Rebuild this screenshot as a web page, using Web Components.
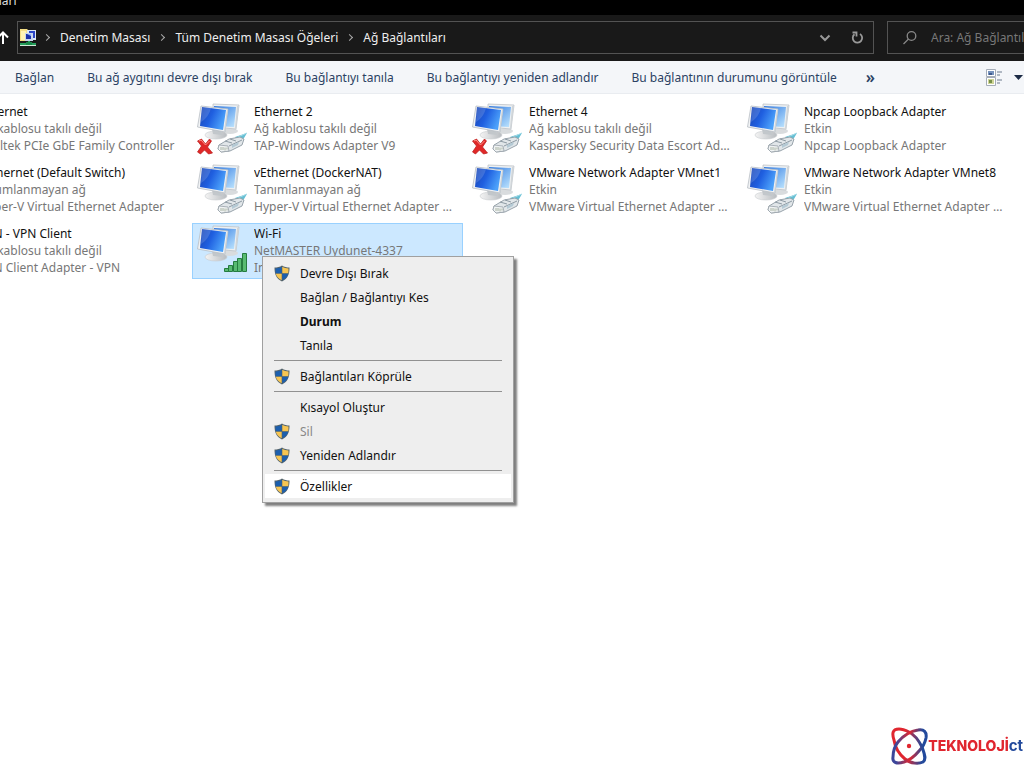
<!DOCTYPE html>
<html lang="tr">
<head>
<meta charset="utf-8">
<meta name="viewport" content="width=device-width, initial-scale=1">
<title>Ağ Bağlantıları</title>
<style>
  body {
    margin: 0;
    min-height: 100vh;
    overflow: hidden;
    background: #fff;
    color: #111;
    font: 12px/17px "Noto Sans", "Open Sans", sans-serif;
  }
</style>
</head>
<body>

<explorer-window>
  <title-bar slot="title">Ağ Bağlantıları</title-bar>

  <address-bar slot="address" placeholder="Ara: Ağ Bağlantıları">
    <a href="#panel">Denetim Masası</a>
    <a href="#tum">Tüm Denetim Masası Öğeleri</a>
    <a href="#ag">Ağ Bağlantıları</a>
  </address-bar>

  <command-bar slot="commands">
    <button>Bağlan</button>
    <button>Bu ağ aygıtını devre dışı bırak</button>
    <button>Bu bağlantıyı tanıla</button>
    <button>Bu bağlantıyı yeniden adlandır</button>
    <button>Bu bağlantının durumunu görüntüle</button>
    <button class="more" aria-label="Diğer komutlar">»</button>
  </command-bar>

  <adapter-tile name="Ethernet" state="Ağ kablosu takılı değil" device="Realtek PCIe GbE Family Controller" kind="off"></adapter-tile>
  <adapter-tile name="Ethernet 2" state="Ağ kablosu takılı değil" device="TAP-Windows Adapter V9" kind="off"></adapter-tile>
  <adapter-tile name="Ethernet 4" state="Ağ kablosu takılı değil" device="Kaspersky Security Data Escort Adapter" kind="off"></adapter-tile>
  <adapter-tile name="Npcap Loopback Adapter" state="Etkin" device="Npcap Loopback Adapter"></adapter-tile>
  <adapter-tile name="vEthernet (Default Switch)" state="Tanımlanmayan ağ" device="Hyper-V Virtual Ethernet Adapter"></adapter-tile>
  <adapter-tile name="vEthernet (DockerNAT)" state="Tanımlanmayan ağ" device="Hyper-V Virtual Ethernet Adapter #2"></adapter-tile>
  <adapter-tile name="VMware Network Adapter VMnet1" state="Etkin" device="VMware Virtual Ethernet Adapter VMnet1"></adapter-tile>
  <adapter-tile name="VMware Network Adapter VMnet8" state="Etkin" device="VMware Virtual Ethernet Adapter VMnet8"></adapter-tile>
  <adapter-tile name="VPN - VPN Client" state="Ağ kablosu takılı değil" device="VPN Client Adapter - VPN" kind="off"></adapter-tile>
  <adapter-tile name="Wi-Fi" state="NetMASTER Uydunet-4337" device="Intel(R)" kind="wifi" selected>
    <context-menu>
      <menu-item shield>Devre Dışı Bırak</menu-item>
      <menu-item>Bağlan / Bağlantıyı Kes</menu-item>
      <menu-item default>Durum</menu-item>
      <menu-item>Tanıla</menu-item>
      <hr>
      <menu-item shield>Bağlantıları Köprüle</menu-item>
      <hr>
      <menu-item>Kısayol Oluştur</menu-item>
      <menu-item shield disabled>Sil</menu-item>
      <menu-item shield>Yeniden Adlandır</menu-item>
      <hr>
      <menu-item shield active>Özellikler</menu-item>
    </context-menu>
  </adapter-tile>

  <site-logo slot="logo"></site-logo>
</explorer-window>

<script>
class ExplorerWindow extends HTMLElement {
  constructor() {
    super();
    this.attachShadow({ mode: "open" }).innerHTML = `
      <style>
        :host {
          display: flex;
          flex-direction: column;
          min-height: 100vh;
        }

        /* the folder view is scrolled a little to the right */
        main {
          display: grid;
          grid-template-columns: repeat(auto-fill, 271px);
          gap: 5px 4px;
          margin-left: -83px;
          padding-top: 7px;
        }
      </style>
      <slot name="title"></slot>
      <slot name="address"></slot>
      <slot name="commands"></slot>
      <main><slot></slot></main>
      <slot name="logo"></slot>
    `;
  }
}

class TitleBar extends HTMLElement {
  constructor() {
    super();
    this.attachShadow({ mode: "open" }).innerHTML = `
      <style>
        :host {
          display: flex;
          align-items: flex-end;
          height: 15px;
          background: #000;
          color: #ddd;
          overflow: hidden;
        }

        span {
          margin: 0 0 6px -66px;
          white-space: nowrap;
        }
      </style>
      <span><slot></slot></span>
    `;
  }
}

class AddressBar extends HTMLElement {
  constructor() {
    super();
    this.attachShadow({ mode: "open" }).innerHTML = `
      <style>
        :host {
          display: flex;
          height: 46px;
          box-sizing: border-box;
          padding: 6px 0 7px;
          background: #191919;
          color: #eee;
        }

        button {
          display: flex;
          align-items: center;
          justify-content: center;
          padding: 0;
          border: 0;
          background: none;
          color: #999;
        }

        .up {
          width: 17px;
          justify-content: flex-start;
          color: #fff;
        }

        .path {
          flex: 1;
          display: flex;
          align-items: center;
          box-sizing: border-box;
          border: 1px solid #535353;
          padding-left: 2px;
        }

        nav {
          flex: 1;
          display: flex;
          gap: 2px;
        }

        .path button {
          width: 32px;
          height: 100%;
        }

        ::slotted(a) {
          display: flex;
          align-items: center;
          color: inherit;
          text-decoration: none;
          white-space: nowrap;
        }

        ::slotted(a)::before {
          content: "";
          width: 4px;
          height: 4px;
          margin: 0 11px 0 7px;
          border: solid #aaa;
          border-width: 1px 1px 0 0;
          transform: rotate(45deg);
        }

        label {
          display: flex;
          align-items: center;
          box-sizing: border-box;
          width: 137px;
          margin-left: 13px;
          padding-left: 14px;
          border: 1px solid #535353;
          border-right: 0;
          color: #888;
        }

        input {
          flex: 1;
          min-width: 0;
          margin-left: 13px;
          padding: 0;
          border: 0;
          background: none;
          font: inherit;
          color: inherit;
        }

        input::placeholder {
          color: #777;
        }
      </style>
      <button class="up" aria-label="Yukarı">
        <svg width="9" height="14" viewBox="0 0 9 14" fill="none" stroke="currentColor" stroke-width="2"><path d="M3 13V2M-2 6.5 3 1.5l5 5"/></svg>
      </button>
      <div class="path">
        <svg width="17" height="18" viewBox="0 0 17 18">
          <path d="M0 0h7l2 2v10H0z" fill="#f5df86"/>
          <path d="M1 2h5v9H1z" fill="#fff3b4"/>
          <path d="M7 1h9v10H7z" fill="#dce7f5"/>
          <path d="M9 2h6v7H9z" fill="#2a45c8"/>
          <path d="M5 4h8v8H5z" fill="#c8d6ee"/>
          <path d="M6 5h5v5H6z" fill="#1b2fa8"/>
          <path d="M7 5h4v2z" fill="#8fb4ff"/>
          <path d="M8 12h2v2h6v2H0v-2h8z" fill="#26a05c"/>
          <path d="M6 13h6v3H6z" fill="#188a49"/>
          <path d="M0 16h16v1H0z" fill="#cfe9d8"/>
        </svg>
        <nav aria-label="Konum"><slot></slot></nav>
        <button aria-label="Önceki konumlar">
          <svg width="12" height="8" viewBox="0 0 12 8" fill="none" stroke="currentColor" stroke-width="2"><path d="m1.500 1.500 4.500 4.500 4.500-4.500"/></svg>
        </button>
        <button aria-label="Yenile">
          <svg width="13" height="13" viewBox="0 0 13 13" fill="none" stroke="currentColor" stroke-width="1.800"><path d="M9 3a4.700 4.700 0 1 1-5.500.3"/><path d="M1.500 1.500h4v4"/></svg>
        </button>
      </div>
      <label>
        <svg width="16" height="16" viewBox="0 0 16 16" fill="none" stroke="currentColor" stroke-width="1.300"><circle cx="9.500" cy="6" r="4.300"/><path d="m6.500 9-5 5"/></svg>
        <input type="text" aria-label="Ara">
      </label>
    `;
  }

  connectedCallback() {
    this.shadowRoot.querySelector("input").placeholder = this.getAttribute("placeholder");
  }
}

class CommandBar extends HTMLElement {
  constructor() {
    super();
    this.attachShadow({ mode: "open" }).innerHTML = `
      <style>
        :host {
          display: flex;
          align-items: center;
          gap: 33px;
          height: 33px;
          box-sizing: border-box;
          padding-left: 15px;
          background: #f4f6f9;
          border-bottom: 1px solid #e9ecf0;
          color: #2b4263;
        }

        ::slotted(button) {
          padding: 0;
          border: 0;
          background: none;
          font: inherit;
          color: inherit;
          white-space: nowrap;
        }

        ::slotted(.more) {
          margin-left: -4px;
          font-size: 16px;
          font-weight: 600;
        }

        .view {
          display: flex;
          align-items: center;
          gap: 11px;
          margin-left: auto;
          padding: 0;
          border: 0;
          background: none;
        }
      </style>
      <slot></slot>
      <button class="view" aria-label="Görünümü değiştir">
        <svg width="17" height="17" viewBox="0 0 17 17">
          <path d="M.5.500h9v7h-9zM.5 8.500h9v8h-9z" fill="#fff" stroke="#a5adb8"/>
          <path d="M2 2h6v4H2z" fill="#7793bd"/>
          <path d="M3 4h3v2H3z" fill="#3d598d"/>
          <path d="M2 10h6v5H2z" fill="#cfd598"/>
          <path d="M3 11h3v3H3z" fill="#77904a"/>
          <path d="M11 3h5M11 6h3M11 11h5M11 14h3" stroke="#6d7b8d"/>
        </svg>
        <svg width="10" height="5" viewBox="0 0 10 5"><path d="M0 0h9L4.500 5z" fill="#1c2b45"/></svg>
      </button>
    `;
  }
}

class AdapterTile extends HTMLElement {
  constructor() {
    super();
    this.attachShadow({ mode: "open" }).innerHTML = `
      <style>
        :host {
          position: relative;
          display: flex;
          gap: 6px;
          box-sizing: border-box;
          min-height: 56px;
          padding: 1px 6px 0 4px;
          border: 1px solid transparent;
        }

        :host([selected]) {
          background: #cce8ff;
          border-color: #99d1ff;
        }

        svg {
          flex: none;
        }

        .cross, .plug, .bars {
          display: none;
        }

        :host([kind="off"]) .cross,
        :host(:not([kind="wifi"])) .plug,
        :host([kind="wifi"]) .bars {
          display: inline;
        }

        .text {
          flex: 1;
          min-width: 0;
          color: #777;
        }

        .text div {
          overflow: hidden;
          text-overflow: ellipsis;
          white-space: nowrap;
        }

        .name {
          color: #111;
        }
      </style>
      <svg width="51" height="53" viewBox="0 0 51 53">
        <defs>
          <linearGradient id="front" x1="0" y1="0" x2="1" y2=".4">
            <stop offset="0" stop-color="#1a45b4"/>
            <stop offset=".5" stop-color="#1f5fe0"/>
            <stop offset="1" stop-color="#4ba0fa"/>
          </linearGradient>
          <linearGradient id="back" x1="0" y1="0" x2="1" y2="1">
            <stop offset="0" stop-color="#2f78e0"/>
            <stop offset="1" stop-color="#bfe6ff"/>
          </linearGradient>
          <linearGradient id="foot" x1="0" y1="0" x2="1" y2="0">
            <stop offset="0" stop-color="#f4f4f4"/>
            <stop offset="1" stop-color="#b8bcc0"/>
          </linearGradient>
        </defs>
        <ellipse cx="33" cy="28" rx="8" ry="3" fill="#d9dcde"/>
        <path d="m16 1 26 1-3 24-23-2z" fill="#edf0f2" stroke="#bcc2c7" stroke-width=".8"/>
        <path d="m17 3 22 1-2 20-19-1z" fill="url(#back)"/>
        <path d="m40 3 2 0-3 23-1-1z" fill="#d0d5d9"/>
        <ellipse cx="19" cy="32" rx="11" ry="4" fill="url(#foot)" stroke="#c8cbce" stroke-width=".6"/>
        <path d="m15 26 9 1 1 5-9-1z" fill="#c2c7cb"/>
        <path d="m4 3 27 3-3 23L.5 24z" fill="#f0f2f4" stroke="#b8bec4" stroke-width=".8"/>
        <path d="m5 4 24 3-3 20-23-4z" fill="url(#front)"/>
        <path d="m5 4 9 1c-2 7-5 11-10 14z" fill="#fff" opacity=".15"/>
        <path d="m30 6 1 0-3 23-1-1z" fill="#d0d5d9"/>
        <g class="plug">
          <path d="m38 34 12-4-3 5-5 4z" fill="#65bfd4"/>
          <path d="M41 34 50 30" stroke="#a5dce8"/>
          <path d="m22 42 10-6 11-2 4 2-2 6-12 6-9 1-3-3z" fill="#e1e6e9" stroke="#8f9ba4" stroke-width=".9"/>
          <path d="m22 42 9 1 1 5-8 1-3-3z" fill="#f0f3f4" stroke="#98a1a8" stroke-width=".8"/>
          <path d="m32 43 13-6M28 38l7 2M33 36l6 2" stroke="#84929c" stroke-width=".9" fill="none"/>
          <path d="M24 44v3M26 44v3M28 44.500v3M30 44.500v2" stroke="#97a391" stroke-width=".8"/>
          <path d="m35 42 7-3-1 3-6 3z" fill="#b5cad5"/>
        </g>
        <g class="cross">
          <path d="m.5 38 4-2 4 5 4-5 2 2-4 6 5 6-4 1-4-4-4 4-3-2 4-6z" fill="#e02828" stroke="#b81818" stroke-width=".7"/>
          <path d="m2 38 2-1 4.500 5 4-4" stroke="#ff9187" fill="none"/>
        </g>
        <g class="bars" fill="#58bb72" stroke="#257c40">
          <path d="M27.500 43.500h4v3h-4zM31.500 40.500h4v6h-4zM36.500 36.500h4v10h-4zM40.500 33.500h4v13h-4zM45.500 28.500h4v18h-4z"/>
        </g>
      </svg>
      <div class="text">
        <div class="name"></div>
        <div class="state"></div>
        <div class="device"></div>
      </div>
      <slot></slot>
    `;
  }

  connectedCallback() {
    ["name", "state", "device"].forEach(key => {
      this.shadowRoot.querySelector("." + key).textContent = this.getAttribute(key);
    });

    this.addEventListener("click", () => {
      document.querySelectorAll("adapter-tile[selected]").forEach(t => t.removeAttribute("selected"));
      this.setAttribute("selected", "");
    });
  }
}

class ContextMenu extends HTMLElement {
  constructor() {
    super();
    this.attachShadow({ mode: "open" }).innerHTML = `
      <style>
        :host {
          position: absolute;
          top: 32px;
          left: 69px;
          z-index: 10;
          display: block;
          box-sizing: border-box;
          width: 252px;
          padding: 4px 2px;
          background: #eee;
          border: 1px solid #a0a0a0;
          box-shadow: 3px 3px 2px rgba(0, 0, 0, 0.5);
        }

        ::slotted(hr) {
          height: 1px;
          margin: 3px 9px;
          border: 0;
          background: #919191;
        }
      </style>
      <div role="menu"><slot></slot></div>
    `;
  }
}

class MenuItem extends HTMLElement {
  constructor() {
    super();
    this.attachShadow({ mode: "open" }).innerHTML = `
      <style>
        :host {
          display: block;
        }

        button {
          display: flex;
          align-items: center;
          gap: 10px;
          width: 100%;
          height: 24px;
          padding: 0 9px;
          border: 0;
          background: none;
          font: inherit;
          color: #111;
        }

        svg {
          visibility: hidden;
        }

        :host([shield]) svg {
          visibility: visible;
        }

        :host([default]) button {
          font-weight: bold;
        }

        :host([disabled]) button {
          color: #888;
        }

        :host([active]) button,
        button:hover {
          background: #fff;
        }
      </style>
      <button role="menuitem">
        <svg width="16" height="17" viewBox="0 0 16 17">
          <path d="M8 .5C6 2 3 2.500.5 2.500.5 9 2 13.500 8 16.500c6-3 7.500-7.500 7.500-14C13 2.500 10 2 8 .5z" fill="#53636b"/>
          <path d="M7.700 1.800v6.500H1.700A22 22 0 0 1 1.500 3.500c2.200 0 4.400-.5 6.200-1.700z" fill="#1c5fae"/>
          <path d="M8.300 1.800v6.500h6c.2-1.500.2-3 .2-4.800-2.200 0-4.400-.5-6.200-1.700z" fill="#f7c552"/>
          <path d="M7.700 8.700v6.500C4.500 13.500 2.500 11.500 1.800 8.700z" fill="#f7c552"/>
          <path d="M8.300 8.700v6.500c3.200-1.700 5.200-3.700 5.900-6.500z" fill="#1c5fae"/>
        </svg>
        <slot></slot>
      </button>
    `;
  }

  connectedCallback() {
    this.shadowRoot.querySelector("button").disabled = this.hasAttribute("disabled");
  }
}

class SiteLogo extends HTMLElement {
  constructor() {
    super();
    this.attachShadow({ mode: "open" }).innerHTML = `
      <style>
        :host {
          position: fixed;
          right: 1px;
          bottom: 3px;
          display: flex;
          align-items: center;
          font: 800 14px/16px Inter, "Liberation Sans", sans-serif;
          color: #e0262f;
        }

        b {
          font-size: 15px;
          font-weight: 700;
          color: #234a9c;
        }
      </style>
      <svg width="37" height="38" viewBox="0 0 37 38" fill="none" stroke-width="3">
        <defs>
          <linearGradient id="ring" x1="0" y1="0" x2="1" y2="0">
            <stop offset=".4" stop-color="#e0262f"/>
            <stop offset=".9" stop-color="#234a9c"/>
          </linearGradient>
          <linearGradient id="ring2" x1="0" y1="0" x2="1" y2="0">
            <stop offset=".1" stop-color="#3b469a"/>
            <stop offset=".5" stop-color="#e0262f"/>
            <stop offset=".9" stop-color="#234a9c"/>
          </linearGradient>
        </defs>
        <path d="M8 2C1 2 1 7 3 13c1 7 5 14 11 19 6 5 14 5 18 3 4-3 1-9-1-15C28 14 24 8 18 5 14 3 12 2 8 2z" stroke="url(#ring)"/>
        <path d="M27 3c6-1 9 2 8 8-1 5-3 9-7 13-5 6-9 9-15 11-7 2-12 1-11-5 0-5 1-10 5-15C12 9 20 4 27 3z" stroke="url(#ring2)"/>
        <circle cx="18" cy="19" r="2.200" fill="#e0262f" stroke="none"/>
      </svg>
      <span>TEKNOLOJİ<b>ct</b></span>
    `;
  }
}

customElements.define("explorer-window", ExplorerWindow);
customElements.define("title-bar", TitleBar);
customElements.define("address-bar", AddressBar);
customElements.define("command-bar", CommandBar);
customElements.define("adapter-tile", AdapterTile);
customElements.define("context-menu", ContextMenu);
customElements.define("menu-item", MenuItem);
customElements.define("site-logo", SiteLogo);
</script>
</body>
</html>
